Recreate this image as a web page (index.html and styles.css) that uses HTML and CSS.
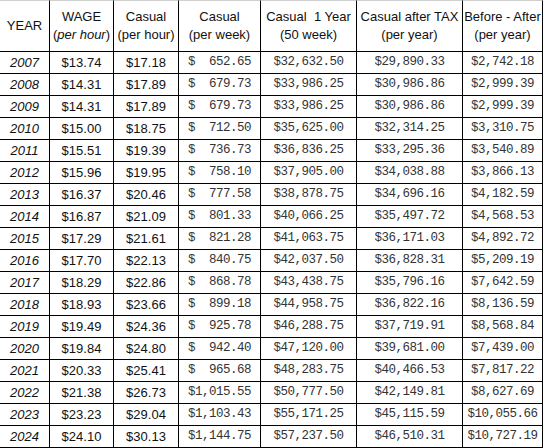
FILE: index.html
```html
<!DOCTYPE html>
<html lang="en">
<head>
    <meta charset="UTF-8">
    <meta name="viewport" content="width=device-width, initial-scale=1.0">
    <title>Wage Table</title>
    <link rel="stylesheet" href="styles.css">
</head>
<body>
    <table class="wage-table">
        <thead>
            <tr>
                <th class="col-year">YEAR</th>
                <th class="col-wage">WAGE<br>(<i>per hour</i>)</th>
                <th class="col-hour">Casual<br>(per hour)</th>
                <th class="col-week">Casual<br>(per week)</th>
                <th class="col-year-total">Casual&nbsp; 1 Year<br>(50 week)</th>
                <th class="col-tax">Casual after TAX<br>(per year)</th>
                <th class="col-diff">Before - After<br>(per year)</th>
            </tr>
        </thead>
        <tbody id="rows"></tbody>
    </table>

    <script>
        const data = [
            ['2007', '$13.74', '$17.18', '652.65', '$32,632.50', '$29,890.33', '$2,742.18'],
            ['2008', '$14.31', '$17.89', '679.73', '$33,986.25', '$30,986.86', '$2,999.39'],
            ['2009', '$14.31', '$17.89', '679.73', '$33,986.25', '$30,986.86', '$2,999.39'],
            ['2010', '$15.00', '$18.75', '712.50', '$35,625.00', '$32,314.25', '$3,310.75'],
            ['2011', '$15.51', '$19.39', '736.73', '$36,836.25', '$33,295.36', '$3,540.89'],
            ['2012', '$15.96', '$19.95', '758.10', '$37,905.00', '$34,038.88', '$3,866.13'],
            ['2013', '$16.37', '$20.46', '777.58', '$38,878.75', '$34,696.16', '$4,182.59'],
            ['2014', '$16.87', '$21.09', '801.33', '$40,066.25', '$35,497.72', '$4,568.53'],
            ['2015', '$17.29', '$21.61', '821.28', '$41,063.75', '$36,171.03', '$4,892.72'],
            ['2016', '$17.70', '$22.13', '840.75', '$42,037.50', '$36,828.31', '$5,209.19'],
            ['2017', '$18.29', '$22.86', '868.78', '$43,438.75', '$35,796.16', '$7,642.59'],
            ['2018', '$18.93', '$23.66', '899.18', '$44,958.75', '$36,822.16', '$8,136.59'],
            ['2019', '$19.49', '$24.36', '925.78', '$46,288.75', '$37,719.91', '$8,568.84'],
            ['2020', '$19.84', '$24.80', '942.40', '$47,120.00', '$39,681.00', '$7,439.00'],
            ['2021', '$20.33', '$25.41', '965.68', '$48,283.75', '$40,466.53', '$7,817.22'],
            ['2022', '$21.38', '$26.73', '1,015.55', '$50,777.50', '$42,149.81', '$8,627.69'],
            ['2023', '$23.23', '$29.04', '1,103.43', '$55,171.25', '$45,115.59', '$10,055.66'],
            ['2024', '$24.10', '$30.13', '1,144.75', '$57,237.50', '$46,510.31', '$10,727.19']
        ];

        const tbody = document.getElementById('rows');
        data.forEach(row => {
            const tr = document.createElement('tr');
            tr.innerHTML =
                `<td class="year">${row[0]}</td>` +
                `<td class="sans">${row[1]}</td>` +
                `<td class="sans">${row[2]}</td>` +
                `<td class="mono"><div class="acct"><span>$</span><span>${row[3]}</span></div></td>` +
                `<td class="mono">${row[4]}</td>` +
                `<td class="mono">${row[5]}</td>` +
                `<td class="mono">${row[6]}</td>`;
            tbody.appendChild(tr);
        });
    </script>
</body>
</html>
```

FILE: styles.css
```css
body {
    margin: 0;
    padding: 0;
    background-color: white;
    font-family: "Liberation Sans", Arial, sans-serif;
}

.wage-table {
    border-collapse: separate;
    border-spacing: 0;
    table-layout: fixed;
    width: 543px;
}

.wage-table th,
.wage-table td {
    box-sizing: border-box;
    padding: 0;
    border-right: 1px solid #000;
    border-bottom: 1px solid #000;
    text-align: center;
    vertical-align: middle;
}

.wage-table th {
    height: 52px;
    border-top: 1px solid #cfcfcf;
    font-size: 13px;
    font-weight: normal;
    line-height: 18px;
    color: #111;
}

.wage-table td {
    height: 22px;
    line-height: 21px;
    font-size: 13px;
    color: #111;
}

.col-year { width: 50px; }
.col-wage { width: 64px; }
.col-hour { width: 65px; }
.col-week { width: 82px; }
.col-year-total { width: 96px; }
.col-tax { width: 106px; }
.col-diff { width: 80px; }

.wage-table td.year {
    font-style: italic;
}

.wage-table td.mono {
    font-family: "Liberation Mono", "Courier New", monospace;
    font-size: 12.5px;
    letter-spacing: -0.5px;
    color: #333;
}

.acct {
    display: flex;
    justify-content: space-between;
    padding: 0 9px;
}
```
